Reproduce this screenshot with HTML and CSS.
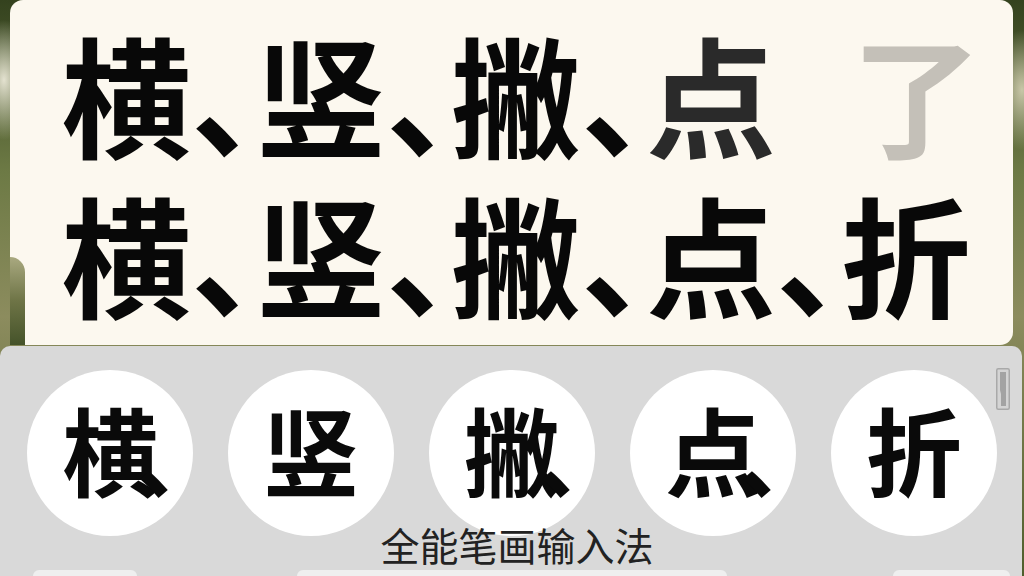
FILE: index.html
```html
<!DOCTYPE html>
<html lang="zh-CN">
<head>
<meta charset="utf-8">
<title>全能笔画输入法</title>
<link rel="stylesheet" href="styles.css">
</head>
<body>
<div class="screen">
  <div class="card">
    <div class="line line-one">横、竖、撇、<span class="soft">点</span><span class="gap"></span><span class="ghost">了</span></div>
    <div class="line">横、竖、撇、点、折</div>
  </div>
  <div class="panel">
    <div class="keys">
      <div class="key">横<span class="dun">、</span></div>
      <div class="key">竖</div>
      <div class="key">撇<span class="dun">、</span></div>
      <div class="key">点<span class="dun">、</span></div>
      <div class="key">折</div>
    </div>
    <div class="label">全能笔画输入法</div>
    <div class="next-row">
      <div class="peek peek-a"></div>
      <div class="peek peek-b"></div>
      <div class="peek peek-c"></div>
    </div>
    <svg class="handle" width="14" height="42" viewBox="0 0 14 42">
      <rect x="0.75" y="0.75" width="12.5" height="40.5" rx="1.5" fill="#d4d4d4" stroke="#a9a9a9" stroke-width="1.5"/>
      <path d="M4 4 H10 V38 H5 V26 L4 22 Z" fill="#a3a3a3"/>
    </svg>
  </div>
</div>
</body>
</html>
```
FILE: styles.css
```css
html, body {
  margin: 0;
  padding: 0;
}
body {
  width: 1024px;
  height: 576px;
  overflow: hidden;
  font-family: "Noto Sans CJK SC", "Noto Sans", sans-serif;
  background:
    radial-gradient(ellipse 30px 60px at 4px 80px, #e4e2d0 0%, rgba(228,226,208,0) 100%),
    radial-gradient(ellipse 30px 60px at 1022px 90px, #c9c7a8 0%, rgba(201,199,168,0) 100%),
    linear-gradient(180deg, #34421e 0%, #6d7a45 30%, #8c8c5e 55%, #4f5e2c 100%);
}
.screen {
  display: flex;
  flex-direction: column;
  height: 576px;
}
.card {
  position: relative;
  margin-left: 10px;
  width: 1003px;
  height: 345px;
  box-sizing: border-box;
  padding: 11px 0 0 51px;
  background: #fcf8ef;
  border-radius: 13px 13px 13px 0;
}
.card::before {
  content: "";
  position: absolute;
  left: 0;
  bottom: 0;
  width: 15px;
  height: 88px;
  background: linear-gradient(180deg, #a9a980 0%, #6e7446 50%, #45532a 100%);
  border-top-right-radius: 15px;
}
.line {
  font-size: 130px;
  line-height: 160px;
  font-weight: 700;
  color: #080808;
  white-space: nowrap;
  font-feature-settings: "halt";
}
.line .soft {
  color: #2a2a2a;
}
.gap {
  display: inline-block;
  width: 0.58em;
}
.ghost {
  color: #c4c0b8;
  font-weight: 700;
}
.panel {
  position: relative;
  margin-top: 1px;
  width: 1022px;
  flex: 1;
  display: flex;
  flex-direction: column;
  background: #d9d9d9;
  border-radius: 10px 10px 0 0;
  overflow: hidden;
}
.keys {
  display: flex;
  gap: 35px;
  padding: 24px 0 0 27px;
}
.key {
  width: 166px;
  height: 166px;
  border-radius: 50%;
  background: #ffffff;
  display: flex;
  align-items: center;
  justify-content: center;
  box-sizing: border-box;
  padding-bottom: 10px;
  font-size: 96px;
  line-height: 1;
  font-weight: 700;
  color: #0a0a0a;
}
.dun {
  position: relative;
  top: 0.08em;
  margin-left: -0.25em;
  margin-right: -0.75em;
  font-size: 0.9em;
}
.label {
  margin-top: -12px;
  text-align: center;
  font-size: 39px;
  line-height: 40px;
  color: #222222;
  padding-left: 12px;
}
.next-row {
  margin-top: auto;
  display: flex;
  height: 6px;
}
.peek {
  height: 12px;
  background: #efefef;
  border-radius: 6px 6px 0 0;
}
.peek-a {
  margin-left: 33px;
  width: 104px;
}
.peek-b {
  margin-left: 160px;
  width: 430px;
}
.peek-c {
  margin-left: 166px;
  width: 117px;
}
.handle {
  position: absolute;
  left: 996px;
  top: 22px;
}
```
